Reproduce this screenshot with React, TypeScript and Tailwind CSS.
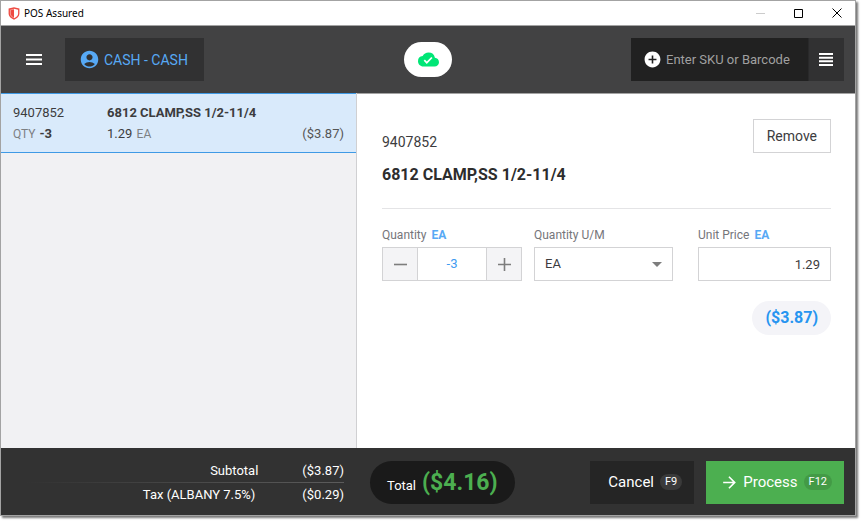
import { useState } from 'react';
import { MdAccountCircle, MdAddCircle, MdArrowDropDown, MdArrowForward, MdCloudDone } from 'react-icons/md';

const item = {
  sku: '9407852',
  name: '6812 CLAMP,SS 1/2-11/4',
  unit: 'EA',
  price: '1.29',
  total: '($3.87)',
};

const totals = [
  { label: 'Subtotal', value: '($3.87)', pad: 'pr-[44px]' },
  { label: 'Tax (ALBANY 7.5%)', value: '($0.29)', pad: 'pr-[47px]' },
];

function ShieldLogo() {
  return (
    <svg viewBox="0 0 12 13" className="h-[13px] w-3" aria-hidden="true">
      <path d="M6 .3 11.4 1.600v5.200c0 2.600-2.200 4.600-5.400 5.900C2.800 11.400.6 9.400.6 6.800V1.600z" fill="#ee4a42" />
      <path d="M6 1.700v9.500C3.400 10 1.900 8.600 1.900 6.700V2.700z" fill="#f7a49d" />
      <path d="M6 1.700v9.500C8.600 10 10.100 8.600 10.100 6.700V2.700z" fill="#fff" />
      <path d="M6 2.500v8C3.900 9.400 2.800 8.200 2.800 6.700V3.300z" fill="#ee4a42" />
    </svg>
  );
}

function TitleBar() {
  return (
    <div className="flex h-[25px] flex-shrink-0 items-center border-b border-[#a3a3a3] bg-white pl-[7px] pr-[13px]">
      <ShieldLogo />
      <span className="ml-1 flex-1 font-['Noto_Sans',sans-serif] text-[10px] text-black">POS Assured</span>
      <div className="flex items-center gap-[29px] text-black">
        <button aria-label="Minimize">
          <svg viewBox="0 0 9 9" className="h-[9px] w-[9px]" stroke="#ccc" fill="none">
            <path d="M0 4.500h9" />
          </svg>
        </button>
        <button aria-label="Maximize">
          <svg viewBox="0 0 9 9" className="h-[9px] w-[9px]" stroke="currentColor" fill="none">
            <path d="M.5.500h8v8h-8z" />
          </svg>
        </button>
        <button aria-label="Close">
          <svg viewBox="0 0 10 10" className="h-[10px] w-[10px]" stroke="currentColor" fill="none">
            <path d="M.5.500l9 9M9.500.500l-9 9" />
          </svg>
        </button>
      </div>
    </div>
  );
}

function Header() {
  return (
    <header className="flex h-[67px] flex-shrink-0 items-center justify-between bg-[#424243] px-[11px]">
      <div className="flex flex-1 items-center gap-[9px]">
        <button aria-label="Menu" className="px-3.5">
          <svg viewBox="0 0 16 11" className="h-[11px] w-4" fill="#fff">
            <path d="M0 0h16v2H0zM0 4.500h16v2H0zM0 9h16v2H0z" />
          </svg>
        </button>
        <button className="flex h-[43px] items-center gap-1 bg-[#313132] pl-3.5 pr-4 text-sm text-[#57a9f5]">
          <MdAccountCircle className="h-[21px] w-[21px]" />
          CASH - CASH
        </button>
      </div>
      <button aria-label="Online" className="flex h-[35px] w-12 items-center justify-center rounded-full bg-white">
        <MdCloudDone className="h-[21px] w-[21px] text-[#00e676]" />
      </button>
      <div className="flex flex-1 justify-end">
        <div className="flex h-[43px] w-[177px] items-center gap-1 bg-[#212121] pl-3">
          <MdAddCircle className="h-[19px] w-[19px] flex-shrink-0 text-white" />
          <input
            aria-label="Enter SKU or Barcode"
            placeholder="Enter SKU or Barcode"
            className="w-full min-w-0 bg-transparent text-[13px] text-white outline-none placeholder:text-[#a0a0a0]"
          />
        </div>
        <button aria-label="Item list" className="flex h-[43px] w-9 items-center justify-center border-l border-[#29292a] bg-[#313132] pr-px">
          <svg viewBox="0 0 14 13" className="h-[13px] w-3.5" fill="#fff">
            <path d="M0 0h14v2H0zM0 3.700h14v2H0zM0 7.300h14v2H0zM0 11h14v2H0z" />
          </svg>
        </button>
      </div>
    </header>
  );
}

function CartList() {
  return (
    <aside className="w-[356px] flex-shrink-0 border-r border-[#d0d0d2] bg-[#f1f1f3]">
      <button className="flex h-[60px] w-full flex-col justify-center gap-px border-y border-[#3f9ae5] bg-[#d9eafb] px-3 text-left text-[13px] leading-5">
        <span className="flex w-full">
          <span className="w-[94px]">{item.sku}</span>
          <b>{item.name}</b>
        </span>
        <span className="flex w-full">
          <span className="w-[94px]">
            <span className="mr-1 text-xs text-[#7d8083]">QTY</span>
            <b>-3</b>
          </span>
          <span className="flex-1">
            {item.price} <span className="ml-px text-xs text-[#7d8083]">{item.unit}</span>
          </span>
          <span className="text-[#555]">{item.total}</span>
        </span>
      </button>
    </aside>
  );
}

function ItemDetail() {
  const [qty, setQty] = useState(-3);

  return (
    <main className="flex-1 border-t border-[#a3a3a3] bg-white pl-[25px] pr-6 pt-[25px]">
      <div className="flex items-start justify-between border-b border-[#e4e4e6] pb-[21px]">
        <div className="pt-[11px]">
          <p className="text-sm leading-6">{item.sku}</p>
          <h1 className="mt-[9px] text-base font-bold leading-6 text-[#2d2d2d]">{item.name}</h1>
        </div>
        <button className="h-[34px] border border-[#d3d3d5] px-[13px] text-sm">Remove</button>
      </div>

      <div className="mt-[18px] flex text-[13px]">
        <div className="w-[140px]">
          <label htmlFor="qty" className="block text-xs leading-4 text-[#75757a]">
            Quantity <b className="ml-0.5 font-bold text-[#57a9f5]">{item.unit}</b>
          </label>
          <div className="mt-1 flex h-[34px] border border-[#d3d3d5]">
            <button
              aria-label="Decrease"
              onClick={() => setQty(qty - 1)}
              className="flex w-[35px] items-center justify-center border-r border-[#d3d3d5] bg-[#f4f4f6]"
            >
              <svg viewBox="0 0 13 13" className="h-[13px] w-[13px]" fill="#7d7d7d">
                <path d="M0 5.700h13v1.600H0z" />
              </svg>
            </button>
            <input
              id="qty"
              value={qty}
              onChange={(e) => setQty(Number(e.target.value))}
              className="w-0 flex-1 text-center text-[#3f9bf0] outline-none"
            />
            <button
              aria-label="Increase"
              onClick={() => setQty(qty + 1)}
              className="flex w-[35px] items-center justify-center border-l border-[#d3d3d5] bg-[#f4f4f6]"
            >
              <svg viewBox="0 0 13 13" className="h-[13px] w-[13px]" fill="#7d7d7d">
                <path d="M0 5.700h13v1.600H0zM5.700 0h1.600v13H5.700z" />
              </svg>
            </button>
          </div>
        </div>

        <div className="ml-3 w-[139px]">
          <label htmlFor="uom" className="block text-xs leading-4 text-[#75757a]">
            Quantity U/M
          </label>
          <div className="relative mt-1">
            <select id="uom" className="h-[34px] w-full appearance-none border border-[#d3d3d5] bg-white px-2.5 outline-none">
              <option>EA</option>
            </select>
            <MdArrowDropDown className="pointer-events-none absolute right-1 top-[5px] h-6 w-6 text-[#7d7d7d]" />
          </div>
        </div>

        <div className="ml-auto w-[133px]">
          <label htmlFor="price" className="block text-xs leading-4 text-[#75757a]">
            Unit Price <b className="ml-0.5 font-bold text-[#57a9f5]">{item.unit}</b>
          </label>
          <input
            id="price"
            defaultValue={item.price}
            className="mt-1 h-[34px] w-full border border-[#d3d3d5] px-2.5 text-right outline-none"
          />
        </div>
      </div>

      <div className="mt-5 flex justify-end">
        <span className="flex h-[34px] items-center rounded-full bg-[#f4f4f8] px-[13px] text-base font-bold text-[#2795f0]">
          {item.total}
        </span>
      </div>
    </main>
  );
}

function Footer() {
  return (
    <footer className="flex h-[67px] flex-shrink-0 items-center bg-[#323232] pr-[11px] pt-px text-white">
      <div className="w-[343px] flex-shrink-0 pl-6 text-[13px] leading-[23px]">
        {totals.map((t, i) => (
          <div key={t.label}>
            {i > 0 && <div className="h-px bg-gradient-to-r from-transparent to-[#5c5c5c]" />}
            <div className="flex justify-end">
              <span className={t.pad}>{t.label}</span>
              <span>{t.value}</span>
            </div>
          </div>
        ))}
      </div>
      <div className="ml-[26px] flex h-[43px] items-baseline rounded-full bg-[#1a1a1a] px-[17px] leading-[43px]">
        <span className="mr-1.5 text-[13px]">Total</span>
        <span className="text-[23px] font-bold text-[#4caf50]">($4.16)</span>
      </div>
      <div className="ml-auto flex gap-3">
        <button className="flex h-[43px] items-center bg-[#252525] pl-[18px] pr-3 text-[15px]">
          Cancel
          <kbd className="ml-1.5 rounded-full bg-[#3a3a3a] px-[5px] font-['Roboto',sans-serif] text-[11px] leading-4">F9</kbd>
        </button>
        <button className="flex h-[43px] items-center bg-[#4caf50] pl-3.5 pr-3 text-[15px]">
          <MdArrowForward className="mr-1 h-[19px] w-[19px]" />
          Process
          <kbd className="ml-1.5 rounded-full bg-[#439a46] px-[5px] font-['Roboto',sans-serif] text-[11px] leading-4">F12</kbd>
        </button>
      </div>
    </footer>
  );
}

export default function App() {
  return (
    <div className="h-screen bg-white pb-1.5 pr-1.5 font-['Roboto',sans-serif] text-[#3c3c3e]">
      <div className="flex h-full flex-col border border-[#a3a3a3] shadow-[2px_2px_2px_#777]">
        <TitleBar />
        <Header />
        <div className="flex flex-1">
          <CartList />
          <ItemDetail />
        </div>
        <Footer />
      </div>
    </div>
  );
}
